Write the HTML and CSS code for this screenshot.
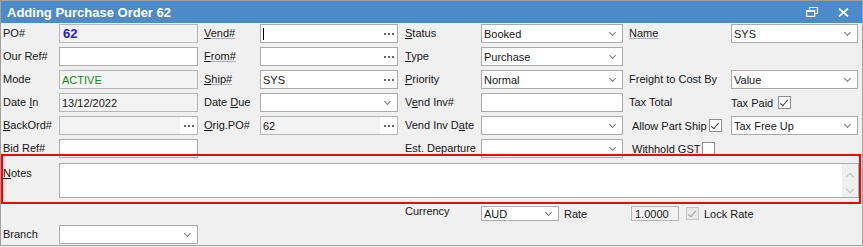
FILE: index.html
```html
<!DOCTYPE html>
<html lang="en">
<head>
  <meta charset="UTF-8">
  <title>Adding Purchase Order 62</title>
  <link rel="stylesheet" href="styles.css">
</head>
<body>

  <div class="window">
    <div class="titlebar">
      <span class="title">Adding Purchase Order 62</span>
      <div class="win-buttons">
        <svg width="12" height="10" viewBox="0 0 12 10"><path d="M3.5 2.5V0.5H11.5V6.5H9" fill="none" stroke="#fff" stroke-width="1.2"/><rect x="0.6" y="3.6" width="8" height="5.8" fill="none" stroke="#fff" stroke-width="1.2"/><path d="M0.6 4.3H8.6" stroke="#fff" stroke-width="1.2"/></svg>
        <svg width="11" height="9" viewBox="0 0 11 9"><path d="M1 0.5L10 8.5M10 0.5L1 8.5" stroke="#fff" stroke-width="1.7"/></svg>
      </div>
    </div>

    <div class="form">
      <!-- row 1 -->
      <div class="lbl">PO#</div>
      <div class="field ro"><span class="val po-num">62</span></div>
      <div class="lbl p6"><span class="link"><u>V</u>end#</span></div>
      <div class="field"><span class="caret"></span><span class="val"></span><span class="dots"></span></div>
      <div class="lbl p7"><u>S</u>tatus</div>
      <div class="field sel"><span class="val">Booked</span></div>
      <div class="lbl p6"><span class="link">Name</span></div>
      <div class="field sel"><span class="val">SYS</span></div>

      <!-- row 2 -->
      <div class="lbl">Our Ref#</div>
      <div class="field"><span class="val"></span></div>
      <div class="lbl p6"><span class="link"><u>F</u>rom#</span></div>
      <div class="field"><span class="val"></span><span class="dots"></span></div>
      <div class="lbl p7"><u>T</u>ype</div>
      <div class="field sel"><span class="val">Purchase</span></div>
      <div></div>
      <div></div>

      <!-- row 3 -->
      <div class="lbl">Mode</div>
      <div class="field ro"><span class="val active">ACTIVE</span></div>
      <div class="lbl p6"><span class="link"><u>S</u>hip#</span></div>
      <div class="field"><span class="val">SYS</span><span class="dots"></span></div>
      <div class="lbl p7"><u>P</u>riority</div>
      <div class="field sel"><span class="val">Normal</span></div>
      <div class="lbl p6">Freight to Cost By</div>
      <div class="field sel"><span class="val">Value</span></div>

      <!-- row 4 -->
      <div class="lbl">Date <u>I</u>n</div>
      <div class="field ro"><span class="val">13/12/2022</span></div>
      <div class="lbl p6">Date <u>D</u>ue</div>
      <div class="field sel"><span class="val"></span></div>
      <div class="lbl p7">V<u>e</u>nd Inv#</div>
      <div class="field"><span class="val"></span></div>
      <div class="lbl p6">Tax Total</div>
      <div class="checkline wide">Tax Paid <span class="check on"></span></div>

      <!-- row 5 -->
      <div class="lbl"><u>B</u>ackOrd#</div>
      <div class="field ro"><span class="val"></span><span class="dots"></span></div>
      <div class="lbl p6"><u>O</u>rig.PO#</div>
      <div class="field ro"><span class="val">62</span><span class="dots"></span></div>
      <div class="lbl p7">Vend Inv D<u>a</u>te</div>
      <div class="field sel"><span class="val"></span></div>
      <div class="checkline p9">Allow Part Ship <span class="check on"></span></div>
      <div class="field sel"><span class="val">Tax Free Up</span></div>

      <!-- row 6 -->
      <div class="lbl">Bid Ref#</div>
      <div class="field"><span class="val"></span></div>
      <div></div>
      <div></div>
      <div class="lbl p7">Est. Departure</div>
      <div class="field sel"><span class="val"></span></div>
      <div class="checkline p9">Withhold GST <span class="check"></span></div>
      <div></div>

      <!-- notes -->
      <div class="lbl notes-lbl"><u>N</u>otes</div>
      <div class="notes">
        <div class="scroll">
          <span class="arrow up"></span>
          <span class="arrow down"></span>
        </div>
      </div>

      <!-- currency -->
      <div></div>
      <div></div>
      <div></div>
      <div></div>
      <div class="lbl p7">Currency</div>
      <div class="currency">
        <div class="field sel small aud"><span class="val">AUD</span></div>
        <span class="rate-lbl">Rate</span>
        <div class="field ro small rate"><span class="val">1.0000</span></div>
        <span class="check on disabled"></span>
        <span class="lock-lbl">Lock Rate</span>
      </div>

      <!-- branch -->
      <div class="lbl">Branch</div>
      <div class="field sel"><span class="val"></span></div>
    </div>

    <!-- annotation box round the notes row -->
    <div class="highlight"></div>
  </div>

</body>
</html>
```

FILE: styles.css
```css
body {
  margin: 0;
  font-family: "Liberation Sans", Arial, sans-serif;
  font-size: 11px;
  color: #161616;
  background: #f0f0f0;
}

.window {
  position: relative;
  width: 861px;
  border: 1px solid #a0a0a0;
  background: #f0f0f0;
}

.titlebar {
  height: 22px;
  background: #4b8bc9;
  display: flex;
  align-items: center;
  justify-content: space-between;
  padding: 0 13px 0 6px;
}

.title {
  color: #fff;
  font-weight: bold;
  font-size: 13px;
}

.win-buttons {
  display: flex;
  align-items: center;
  gap: 20px;
}

.form {
  display: grid;
  grid-template-columns: 56px 139px 62px 138px 83px 142px 108px 127px;
  grid-template-rows: repeat(6, 19px) 36px 19px 19px;
  row-gap: 4px;
  padding: 1px 4px 1px 2px;
}

.lbl {
  line-height: 19px;
  white-space: nowrap;
}

.lbl.p6 { padding-left: 6px; }
.lbl.p7 { padding-left: 7px; }

.link {
  text-decoration: underline;
  text-decoration-color: #a9a9bd;
}

u {
  text-decoration-color: #161616;
}

.field {
  box-sizing: border-box;
  height: 19px;
  border: 1px solid #ababab;
  background: #fff;
  display: flex;
  align-items: center;
  padding-left: 2px;
  white-space: nowrap;
}

.field.ro {
  background: #f3f3f3;
  border-color: #b6b6b6;
}

.field .val {
  flex: 1;
  overflow: hidden;
}

.po-num {
  color: #2323d4;
  font-weight: bold;
  font-size: 13px;
  padding-left: 1px;
}

.active {
  color: #15891a;
}

.caret {
  width: 1px;
  height: 12px;
  background: #000;
}

/* dropdown chevron */
.sel::after {
  content: "";
  width: 4px;
  height: 4px;
  border-right: 1.5px solid #7a7a7a;
  border-bottom: 1.5px solid #7a7a7a;
  transform: rotate(45deg);
  margin: 0 7px 3px 0;
}

/* ellipsis button */
.dots {
  width: 17px;
  height: 17px;
  background: #fff;
  display: flex;
  align-items: center;
  justify-content: center;
}

.dots::after {
  content: "";
  width: 2px;
  height: 2px;
  background: #666;
  margin-right: 8px;
  box-shadow: 4px 0 #666, 8px 0 #666;
}

.checkline {
  display: flex;
  align-items: center;
  gap: 2px;
  white-space: nowrap;
}

.checkline.wide { gap: 5px; }
.checkline.p9 { padding-left: 9px; }

.check {
  position: relative;
  box-sizing: border-box;
  width: 13px;
  height: 13px;
  border: 1px solid #8e8e8e;
  background: #fff;
  flex: none;
}

.check.on::after {
  content: "";
  position: absolute;
  left: 3px;
  top: 1px;
  width: 3px;
  height: 7px;
  border-right: 1.6px solid #3d3d3d;
  border-bottom: 1.6px solid #3d3d3d;
  transform: rotate(40deg);
}

.check.disabled {
  border-color: #c6c6c6;
  background: #e8e8e8;
}

.check.disabled::after {
  border-color: #a3a3a3;
}

.notes-lbl {
  line-height: 15px;
  padding-top: 4px;
}

.notes {
  grid-column: 2 / -1;
  box-sizing: border-box;
  margin: 1px -1px 0 0;
  height: 35px;
  border: 1px solid #ababab;
  background: #fff;
  display: flex;
  justify-content: flex-end;
}

.scroll {
  width: 16px;
  background: #efefef;
  display: flex;
  flex-direction: column;
  align-items: center;
  justify-content: space-between;
  padding: 8px 0 5px;
}

.arrow {
  width: 5px;
  height: 5px;
  border-right: 1.5px solid #c2c2c2;
  border-bottom: 1.5px solid #c2c2c2;
}

.arrow.up { transform: rotate(-135deg); margin-top: 2px; }
.arrow.down { transform: rotate(45deg); }

.currency {
  grid-column: 6 / -1;
  align-self: end;
  display: flex;
  align-items: center;
  height: 15px;
}

.field.small {
  height: 15px;
}

.aud {
  width: 78px;
}

.rate-lbl {
  width: 67px;
  margin-left: 5px;
}

.rate {
  width: 48px;
  padding-left: 3px;
}

.currency .check {
  margin-left: 7px;
}

.lock-lbl {
  margin-left: 5px;
}

.highlight {
  position: absolute;
  left: 0;
  top: 153px;
  width: 856px;
  height: 46px;
  border: 2px solid #f00;
}
```
